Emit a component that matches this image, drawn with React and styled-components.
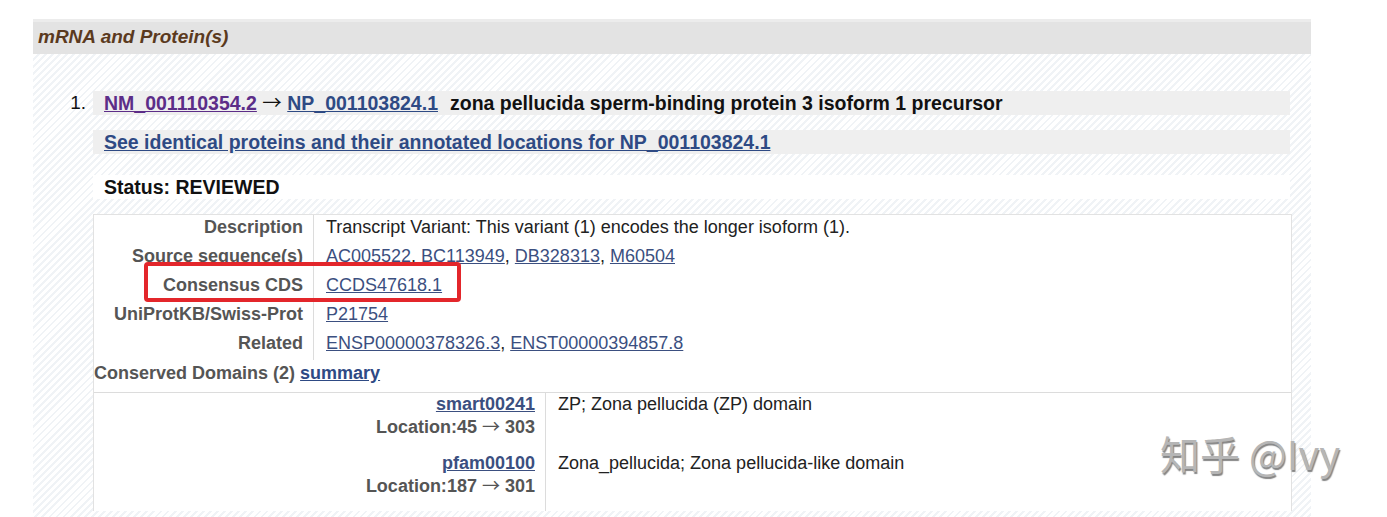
import React from "react";
import styled, { createGlobalStyle } from "styled-components";

const GlobalStyle = createGlobalStyle`
  body {
    margin: 0;
    background: #fff;
    font-family: "Liberation Sans", Arial, sans-serif;
    color: #111;
    overflow: hidden;
  }
`;

const Page = styled.div`
  position: relative;
  height: 517px;
  overflow: hidden;
  box-sizing: border-box;
  padding: 19px 0 0 33px;
`;

const Section = styled.section`
  width: 1278px;
`;

const SectionTitle = styled.h2`
  margin: 0;
  height: 35px;
  box-sizing: border-box;
  border-top: 3px solid #ececec;
  background: #e3e3e3;
  padding-left: 5px;
  font-size: 19px;
  font-weight: bold;
  font-style: italic;
  line-height: 30px;
  color: #5b3a1e;
`;

const Stripes = styled.div`
  background: repeating-linear-gradient(
    135deg,
    #ffffff 0 3px,
    #f0f3f6 3px 5px
  );
  padding: 37px 19px 20px 0;
`;

const Item = styled.div`
  display: flex;
`;

const Marker = styled.div`
  width: 60px;
  padding-right: 7px;
  box-sizing: border-box;
  text-align: right;
  font-size: 19px;
  line-height: 24px;
  flex-shrink: 0;
`;

const ItemBody = styled.div`
  flex: 1;
`;

const Band = styled.div`
  height: 24px;
  line-height: 24px;
  margin: ${(p) => p.$top || 0}px 2px 0 0;
  padding-left: 11px;
  background: ${(p) => (p.$white ? "#ffffff" : "#efefef")};
  font-size: 19.5px;
  font-weight: bold;
  white-space: nowrap;
`;

const HeadLink = styled.a`
  color: ${(p) => (p.$visited ? "#5c2d88" : "#2e4a84")};
  text-decoration: underline;
  font-weight: bold;
`;

// long thin arrow, kept from stretching the line box
const Arrow = styled.span`
  font-family: "Noto Sans CJK SC", "DejaVu Sans", sans-serif;
  font-weight: normal;
  line-height: 1;
`;

const ProteinName = styled.span`
  margin-left: 12px;
`;

const InfoTable = styled.div`
  position: relative;
  margin-top: 15px;
  background: #fff;
  border: 1px solid #e2e2e2;
  border-bottom: none;
`;

const Field = styled.div`
  display: grid;
  grid-template-columns: ${(p) => p.$labelWidth}px 1fr;
`;

const Label = styled.div`
  padding: 0 10px ${(p) => p.$gap ?? 4}px 0;
  border-right: 1px solid #dcdcdc;
  text-align: right;
  font-size: 18px;
  font-weight: bold;
  line-height: ${(p) => p.$line || 25}px;
  color: #555;
`;

const Value = styled.div`
  padding: 0 0 4px 12px;
  font-size: 18px;
  line-height: ${(p) => p.$line || 25}px;
  color: #222;
`;

const DataLink = styled.a`
  color: #3b4f80;
  text-decoration: underline;
`;

const DomainsHeading = styled.div`
  padding: 1px 0 6px;
  border-bottom: 1px solid #dcdcdc;
  font-size: 18px;
  font-weight: bold;
  line-height: 25px;
  color: #555;
`;

const SummaryLink = styled.a`
  color: #2e4a84;
  text-decoration: underline;
`;

const DomainLink = styled.a`
  color: #3b4f80;
  text-decoration: underline;
`;

const Highlight = styled.div`
  position: absolute;
  left: 50px;
  top: 47px;
  width: 317px;
  height: 40px;
  box-sizing: border-box;
  border: 4px solid #e3262b;
  border-radius: 4px;
  pointer-events: none;
`;

const Watermark = styled.div`
  position: absolute;
  left: 1160px;
  top: 433px;
  font-family: "Noto Sans CJK SC", "Liberation Sans", sans-serif;
  font-size: 40px;
  line-height: 1;
  color: #b6b6b6;
  text-shadow: 1px 2px 1px #858585;
  white-space: nowrap;
  pointer-events: none;
`;

const details = [
  {
    label: "Description",
    value: "Transcript Variant: This variant (1) encodes the longer isoform (1).",
  },
  {
    label: "Source sequence(s)",
    links: ["AC005522", "BC113949", "DB328313", "M60504"],
  },
  { label: "Consensus CDS", links: ["CCDS47618.1"] },
  { label: "UniProtKB/Swiss-Prot", links: ["P21754"] },
  { label: "Related", links: ["ENSP00000378326.3", "ENST00000394857.8"] },
];

const domains = [
  {
    id: "smart00241",
    from: 45,
    to: 303,
    text: "ZP; Zona pellucida (ZP) domain",
  },
  {
    id: "pfam00100",
    from: 187,
    to: 301,
    text: "Zona_pellucida; Zona pellucida-like domain",
  },
];

const LinkList = ({ links }) =>
  links.map((id, i) => (
    <React.Fragment key={id}>
      {i > 0 && ", "}
      <DataLink href="#">{id}</DataLink>
    </React.Fragment>
  ));

export default function App() {
  return (
    <>
      <GlobalStyle />
      <Page>
        <Section>
          <SectionTitle>mRNA and Protein(s)</SectionTitle>
          <Stripes>
            <Item>
              <Marker>1.</Marker>
              <ItemBody>
                <Band>
                  <HeadLink href="#" $visited>
                    NM_001110354.2
                  </HeadLink>{" "}
                  <Arrow>→</Arrow>{" "}
                  <HeadLink href="#">NP_001103824.1</HeadLink>
                  <ProteinName>
                    zona pellucida sperm-binding protein 3 isoform 1 precursor
                  </ProteinName>
                </Band>
                <Band $top={15}>
                  <HeadLink href="#">
                    See identical proteins and their annotated locations for
                    NP_001103824.1
                  </HeadLink>
                </Band>
                <Band $top={21} $white>
                  Status: REVIEWED
                </Band>

                <InfoTable>
                  {details.map((d) => (
                    <Field key={d.label} $labelWidth={220}>
                      <Label>{d.label}</Label>
                      <Value>
                        {d.value}
                        {d.links && <LinkList links={d.links} />}
                      </Value>
                    </Field>
                  ))}
                  <DomainsHeading>
                    Conserved Domains (2){" "}
                    <SummaryLink href="#">summary</SummaryLink>
                  </DomainsHeading>
                  {domains.map((d) => (
                    <Field key={d.id} $labelWidth={452}>
                      <Label $line={23} $gap={13}>
                        <DomainLink href="#">{d.id}</DomainLink>
                        <br />
                        Location:{d.from} <Arrow>→</Arrow> {d.to}
                      </Label>
                      <Value $line={23}>{d.text}</Value>
                    </Field>
                  ))}
                  <Highlight />
                </InfoTable>
              </ItemBody>
            </Item>
          </Stripes>
        </Section>
        <Watermark>知乎 @Ivy</Watermark>
      </Page>
    </>
  );
}
